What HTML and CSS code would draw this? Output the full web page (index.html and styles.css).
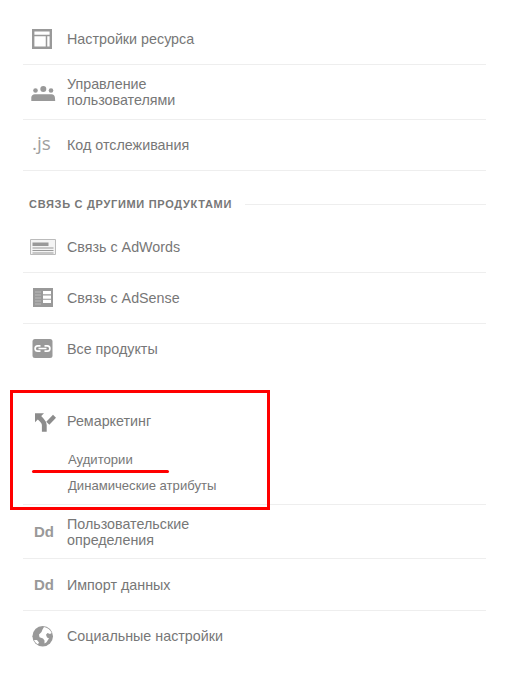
FILE: index.html
```html
<!DOCTYPE html>
<html lang="en">
<head>
  <meta charset="UTF-8" />
  <title>Ресурс</title>
  <link rel="stylesheet" href="styles.css">
</head>
<body>

  <div class="admin-menu">
    <!-- Resource -->
    <ul class="menu-list first">
      <li class="menu-row">
        <span class="menu-icon">
          <svg width="30" height="30" viewBox="0 0 30 30" fill="none" stroke="#999"><path d="M5.200 6.200h17.600v17.600H5.200z" stroke-width="2.400"/><path d="M5 11.500h18M18.500 11.500V24" stroke-width="1.500"/></svg>
        </span>
        <a href="#">Настройки ресурса</a>
      </li>
      <li class="menu-row">
        <span class="menu-icon">
          <svg width="30" height="30" viewBox="0 0 30 30" fill="#999"><circle cx="15.300" cy="12" r="3"/><circle cx="7.500" cy="13.500" r="2.300"/><circle cx="23" cy="13.500" r="2.300"/><path d="M3.300 24v-3.500c0-2 1.500-3.300 3.500-3.300h16.800c2 0 3.200 1.300 3.300 3.300l.3 3.500z"/></svg>
        </span>
        <a href="#">Управление<br>пользователями</a>
      </li>
      <li class="menu-row">
        <span class="menu-icon"><span class="icon-js">.js</span></span>
        <a href="#">Код отслеживания</a>
      </li>
    </ul>

    <!-- Other products -->
    <div class="menu-heading"><span>Связь с другими продуктами</span></div>
    <ul class="menu-list">
      <li class="menu-row">
        <span class="menu-icon">
          <svg width="30" height="30" viewBox="0 0 30 30"><path d="M2.500 7.500h25v15h-25z" fill="#f4f4f4" stroke="#bbb"/><path d="M4.500 10.500h16v3.500h-16z" fill="#999"/><path d="M4.500 16h21M4.500 18.500h21M4.500 21h21" stroke="#999"/></svg>
        </span>
        <a href="#">Связь с AdWords</a>
      </li>
      <li class="menu-row">
        <span class="menu-icon">
          <svg width="30" height="30" viewBox="0 0 30 30"><path d="M5 5h20v19H5z" fill="#999"/><path d="M15 8h8v3.300h-8zM15 12.400h8v3.300h-8zM15 16.800h8v3.300h-8z" fill="#fff"/><path d="M7 9h6M7 12h6M7 15h6M7 18h6M7 21h6" stroke="#bbb"/></svg>
        </span>
        <a href="#">Связь с AdSense</a>
      </li>
      <li class="menu-row no-border">
        <span class="menu-icon">
          <svg width="30" height="30" viewBox="0 0 30 30"><rect x="4.500" y="5" width="20" height="19" rx="2.500" fill="#999"/><path d="M12.500 11.800h-2.700a2.700 2.700 0 0 0 0 5.400h2.700M16.500 11.800h2.700a2.700 2.700 0 0 1 0 5.400h-2.700M10.500 14.500h8" fill="none" stroke="#fff" stroke-width="1.700"/></svg>
        </span>
        <a href="#">Все продукты</a>
      </li>
    </ul>

    <!-- Remarketing -->
    <div class="menu-group">
      <div class="menu-row no-border">
        <span class="menu-icon">
          <svg width="30" height="30" viewBox="0 0 30 30"><path d="M7 7.300h9L7 16.300z" fill="#8c8c8c"/><path d="M10.500 10.800l3.300 3.300q2.500 2.500 2.500 5v6.700" fill="none" stroke="#8c8c8c" stroke-width="4.800"/><path d="M19.800 17.200l6.700-7" fill="none" stroke="#8c8c8c" stroke-width="4.200"/></svg>
        </span>
        <a href="#">Ремаркетинг</a>
      </div>
      <ul class="sub-list">
        <li><a href="#">Аудитории</a></li>
        <li><a href="#">Динамические атрибуты</a></li>
      </ul>
    </div>

    <!-- Data -->
    <ul class="menu-list">
      <li class="menu-row row-custom">
        <span class="menu-icon"><span class="icon-dd">Dd</span></span>
        <a href="#">Пользовательские<br>определения</a>
      </li>
      <li class="menu-row row-import">
        <span class="menu-icon"><span class="icon-dd">Dd</span></span>
        <a href="#">Импорт данных</a>
      </li>
      <li class="menu-row no-border">
        <span class="menu-icon">
          <svg width="30" height="30" viewBox="0 0 30 30"><circle cx="14.700" cy="15.300" r="10.300" fill="#999"/><path d="M16 6c3.500.4 6.500 2.800 7.700 6l-1.700 1-2.500-1-1.500 1.800 1 2.700 2 .7-2.500 4-2 1.300v-3l-1.500-2-3.500-1.200-.5-2.800 2.500-2.500 1-2.500z M6 19c.8 1.800 2.200 3.400 4 4.300l1-1.800-2-2.500z" fill="#fff"/></svg>
        </span>
        <a href="#">Социальные настройки</a>
      </li>
    </ul>

    <!-- Annotation drawn on top of the screenshot -->
    <div class="mark-box"></div>
    <div class="mark-line"></div>
  </div>

</body>
</html>
```

FILE: styles.css
```css
/* === Body === */
body {
  background: #ffffff;
  font-family: 'Liberation Sans', Arial, sans-serif;
  margin: 0;
}

ul {
  list-style: none;
  margin: 0;
  padding: 0;
}

a {
  color: #777777;
  text-decoration: none;
}

/* === Container === */
.admin-menu {
  position: relative;
  width: 463px;
  margin-left: 23px;
  padding-top: 14px;
}

/* === Rows === */
.menu-row {
  display: flex;
  align-items: center;
  min-height: 50px;
  border-bottom: 1px solid #eeeeee;
  font-size: 14.3px;
  line-height: 16px;
}

.menu-row.no-border {
  border-bottom: none;
}

.menu-row a {
  padding: 11px 0;
}

.menu-row.row-custom a {
  padding-bottom: 10px;
}

.menu-row.row-import {
  min-height: 51px;
}

.menu-icon {
  flex: 0 0 44px;
  display: flex;
  align-items: center;
  height: 30px;
  padding-left: 5px;
  box-sizing: border-box;
}

.menu-icon svg {
  display: block;
}

.icon-js {
  margin: 0 0 5px 4px;
  color: #a0a0a0;
  font-family: 'Open Sans', sans-serif;
  font-size: 19px;
}

.icon-dd {
  margin-left: 6px;
  color: #999999;
  font-size: 15px;
  font-weight: 700;
}

/* === Section heading === */
.menu-heading {
  display: flex;
  align-items: center;
  gap: 13px;
  margin: 25px 0 10px;
  padding-left: 6px;
  color: #777777;
  font-size: 11px;
  font-weight: 700;
  letter-spacing: 0.7px;
  line-height: 16px;
  text-transform: uppercase;
}

.menu-heading::after {
  content: "";
  flex: 1;
  border-top: 1px solid #eeeeee;
}

/* === Remarketing group === */
.menu-group {
  margin-top: 22px;
  padding-bottom: 5px;
  border-bottom: 1px solid #eeeeee;
}

.sub-list {
  padding-top: 1px;
}

.sub-list li {
  padding-left: 45px;
  font-size: 13.1px;
  line-height: 26px;
}

/* === Red annotation === */
.mark-box {
  position: absolute;
  left: -13px;
  top: 390px;
  width: 254px;
  height: 114px;
  border: 3px solid #ff0000;
}

.mark-line {
  position: absolute;
  left: 9px;
  top: 470px;
  width: 137px;
  height: 3px;
  border-radius: 2px;
  background: #ff0000;
}
```
